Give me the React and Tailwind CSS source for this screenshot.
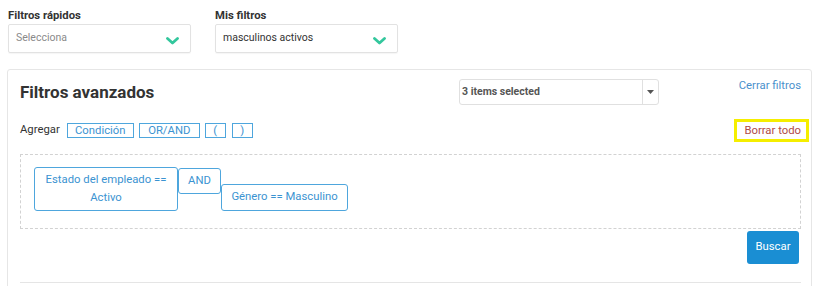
import React from "react";

function Chevron() {
  return (
    <svg width="13" height="8" viewBox="0 0 13 8" className="shrink-0">
      <polyline points="1.5,1.5 6.5,6 11.5,1.5" fill="none" stroke="#33c79d" strokeWidth="2.8" strokeLinecap="round" strokeLinejoin="round" />
    </svg>
  );
}

function QuickSelect({ label, value, placeholder }) {
  return (
    <div className="w-[183px]">
      <div className="text-[11.3px] font-bold leading-[14px] text-[#333] mb-[1px]">{label}</div>
      <div className="h-[29px] border border-[#e2e2e2] rounded-[2px] shadow-[0_1px_1px_rgba(0,0,0,0.04)] flex items-center justify-between pl-[7px] pr-[11px]">
        <span className={placeholder ? "text-[10.5px] text-[#8a8a8a] mb-[2px]" : "text-[10.5px] text-[#333] mb-[2px]"}>{value}</span>
        <span className="mt-[5px]">
          <Chevron />
        </span>
      </div>
    </div>
  );
}

const chip = "h-[15px] border border-[#4ea6dd] text-[#3b93d1] text-[11.3px] leading-[13px] flex items-center justify-center";
const cond = "border border-[#4ea6dd] rounded-[3px] text-[11.3px] leading-[18px] text-[#3b93d1] text-center py-[3px]";

export default function App() {
  return (
    <div className="w-[820px] h-[286px] overflow-hidden bg-white font-['Roboto',sans-serif]">
      <div className="flex gap-6 pl-2 pt-[9px]">
        <QuickSelect label="Filtros rápidos" value="Selecciona" placeholder />
        <QuickSelect label="Mis filtros" value="masculinos activos" />
      </div>

      <div className="mt-[16px] ml-[7px] w-[805px] h-[300px] border border-[#e6e6e6] rounded-[3px] pl-[12px] pr-[10px] pt-[9px]">
        <div className="flex items-center">
          <h2 className="w-[439px] text-[17px] font-bold text-[#333] leading-[22px]">Filtros avanzados</h2>
          <div className="w-[200px] h-[26px] border border-[#e0e0e0] rounded-[3px] flex items-stretch">
            <span className="flex-1 flex items-center pl-[2px] text-[10.5px] font-bold text-[#555]">3 items selected</span>
            <span className="w-[16px] border-l border-[#e0e0e0] flex items-center justify-center">
              <svg width="7" height="4" viewBox="0 0 7 4">
                <polygon points="0,0 7,0 3.5,4" fill="#555" />
              </svg>
            </span>
          </div>
          <div className="flex-1 self-start text-right text-[11.3px] leading-[14px] text-[#4a90cc]">Cerrar filtros</div>
        </div>

        <div className="flex items-center mt-[14px] h-[23px]">
          <span className="text-[11.3px] text-[#333] mr-[7px]">Agregar</span>
          <div className={chip + " w-[67px]"}>Condición</div>
          <div className={chip + " w-[61px] ml-[5px]"}>OR/AND</div>
          <div className={chip + " w-[21px] ml-[5px]"}>(</div>
          <div className={chip + " w-[21px] ml-[6px]"}>)</div>
          <div className="flex-1" />
          <div className="border-[3px] border-[#f5ee00] pl-[7px] pr-[5px] leading-[17px] -mr-[8px] text-[11.3px] text-[#b04a46]">Borrar todo</div>
        </div>

        <div className="mt-[12px] h-[75px] border border-dashed border-[#d2d2d2] pl-[13px] pt-[12px] flex items-start">
          <div className={cond + " w-[144px] h-[44px]"}>
            Estado del empleado ==
            <br />
            Activo
          </div>
          <div className={cond + " w-[43px] h-[26px] mt-[1px]"}>AND</div>
          <div className={cond + " w-[127px] h-[27px] mt-[17px]"}>Género == Masculino</div>
        </div>

        <div className="flex justify-end mt-[2px] pr-[2px]">
          <button className="w-[52px] h-[33px] bg-[#1a8ed3] rounded-[3px] text-white text-[11.3px]">Buscar</button>
        </div>

        <div className="mt-[18px] border-t border-[#e5e5e5]" />
      </div>
    </div>
  );
}
